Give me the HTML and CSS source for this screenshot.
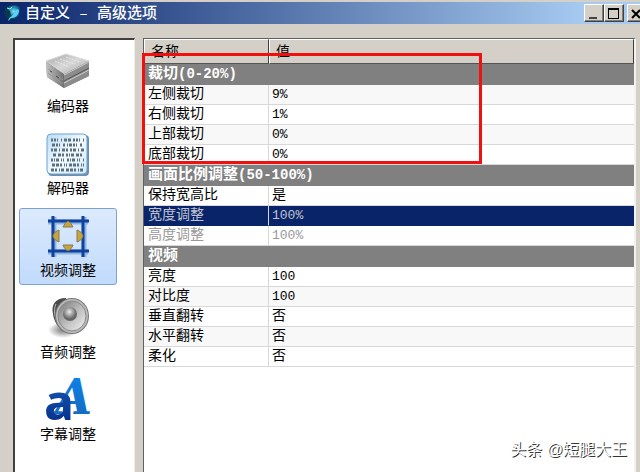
FILE: index.html
```html
<!DOCTYPE html>
<html lang="zh-CN">
<head>
    <meta charset="UTF-8">
    <meta name="viewport" content="width=device-width, initial-scale=1.0">
    <title>自定义 - 高级选项</title>
    <link rel="stylesheet" href="styles.css">
</head>
<body>

<header class="titlebar">
    <svg class="app-icon" width="18" height="18" viewBox="0 0 18 18">
        <defs>
            <radialGradient id="orb" cx="60%" cy="40%">
                <stop offset="0" stop-color="#7fe4f5"/>
                <stop offset="0.5" stop-color="#1f8fb8"/>
                <stop offset="1" stop-color="#082d52"/>
            </radialGradient>
        </defs>
        <path d="M1 3l5-1 7-1 4 2-1 8-5 6-7-1-3-7z" fill="url(#orb)"/>
        <path d="M2 4l5 3 1 5-4 3-3-6z" fill="#07394f"/>
        <path d="M5 17c1-5 5-4 6-8l3-4 2 1c0 5-4 8-7 8-2 0-2 2-4 3z" fill="#5fd0f5"/>
        <path d="M4 4l3 1 2-2" stroke="#9fe8f5" fill="none"/>
    </svg>
    <h1>自定义 – 高级选项</h1>
    <div class="window-buttons">
        <button type="button" aria-label="最小化"><svg width="16" height="14" viewBox="0 0 16 14"><path d="M4 11h8v2H4z" fill="#444"/></svg></button>
        <button type="button" aria-label="最大化"><svg width="16" height="14" viewBox="0 0 16 14"><path d="M3 2h11v11H3zM4 4v8h9V4z" fill-rule="evenodd"/></svg></button>
        <button type="button" class="close" aria-label="关闭"><svg width="16" height="14" viewBox="0 0 16 14"><path d="M4 4l8 8M12 4l-8 8" stroke="#000" stroke-width="2"/></svg></button>
    </div>
</header>

<main class="content">
    <nav class="sidebar">
        <button type="button" class="tab">
            <svg width="48" height="44" viewBox="0 0 48 44">
                <defs>
                    <linearGradient id="boxTop" x1="0" y1="0" x2="1" y2="1">
                        <stop offset="0" stop-color="#a5a5a5"/>
                        <stop offset="0.5" stop-color="#d8d8d8"/>
                        <stop offset="1" stop-color="#a8a8a8"/>
                    </linearGradient>
                    <linearGradient id="boxSide">
                        <stop offset="0" stop-color="#c4c4c4"/>
                        <stop offset="1" stop-color="#6f6f6f"/>
                    </linearGradient>
                </defs>
                <path d="M2 11l20-8 23 7v15L20 37 3 26z" fill="#888"/>
                <path d="M2 10l20-7 23 7-25 13z" fill="url(#boxTop)" stroke="#ddd"/>
                <path d="M2 11l18 12v14L3 26z" fill="url(#boxSide)"/>
                <path d="M20 23l25-13v15L20 37z" fill="#8c8c8c"/>
                <path d="M20 30l25-13" stroke="#555" fill="none"/>
                <path d="M20 24l25-13M20 32l25-13" stroke="#ccc" fill="none"/>
                <path d="M4 18l15 11M4 22l15 11" stroke="#999" fill="none"/>
                <path d="M16 8l15 5M22 6l14 5M11 10l14 6" stroke="#e8e8e8" stroke-dasharray="2 1" fill="none"/>
                <path d="M6 20l2 1M12 25l3 2" stroke="#444"/>
            </svg>
            <span>编码器</span>
        </button>
        <button type="button" class="tab">
            <svg width="44" height="44" viewBox="0 0 44 44">
                <defs>
                    <linearGradient id="sheet" x1="0" y1="0" x2="1" y2="1">
                        <stop offset="0" stop-color="#b9dcf8"/>
                        <stop offset="0.5" stop-color="#f1f9ff"/>
                        <stop offset="1" stop-color="#d1eafb"/>
                    </linearGradient>
                </defs>
                <rect x="2" y="2" width="41" height="41" rx="4" fill="#6d8fac"/>
                <rect x="1" y="1" width="40" height="40" rx="4" fill="url(#sheet)" stroke="#6ba3d5"/>
                <g stroke="#5c6f7b" stroke-width="3" fill="none">
                    <path d="M5 7h34" stroke-dasharray="2 1 2 1 1 3 1 2 3 1 3 2"/>
                    <path d="M6 12h32" stroke-dasharray="3 1 2 1 1 3 2 2 1 1"/>
                    <path d="M5 17h34" stroke-dasharray="2 1 3 2 1 2 3 1 2 2"/>
                    <path d="M7 22h31" stroke-dasharray="3 2 3 1 2 2 2 1 1 1"/>
                    <path d="M5 27h33" stroke-dasharray="2 1 1 1 3 2 1 1 1 3"/>
                    <path d="M6 32h33" stroke-dasharray="3 1 3 1 2 2 1 1 1 2"/>
                    <path d="M5 37h33" stroke-dasharray="3 1 2 2 1 1 3 2 3 1"/>
                </g>
            </svg>
            <span>解码器</span>
        </button>
        <button type="button" class="tab selected">
            <svg width="44" height="44" viewBox="0 0 44 44">
                <path d="M8 2v40M38 2v40M2 7h40M2 37h40" stroke="#8db7e3" stroke-width="5"/>
                <path d="M7 1v41M37 1v41M2 6h41M2 36h41" stroke="#12429d" stroke-width="3"/>
                <g fill="#c6a541" stroke="#887a45">
                    <path d="M17 12c1-2 3-5 5-6 2 1 4 4 5 6z"/>
                    <path d="M17 30h10c-1 3-3 5-5 6-2-1-4-3-5-6z"/>
                    <path d="M13 15v12c-3-1-6-4-6-6s3-5 6-6z"/>
                    <path d="M31 15c3 1 6 4 6 6s-3 5-6 6z"/>
                </g>
            </svg>
            <span>视频调整</span>
        </button>
        <button type="button" class="tab">
            <svg width="48" height="44" viewBox="0 0 48 44">
                <defs>
                    <linearGradient id="ring" x1="0" y1="0" x2="1" y2="1">
                        <stop offset="0" stop-color="#777"/>
                        <stop offset="0.5" stop-color="#bbb"/>
                        <stop offset="1" stop-color="#f3f3f3"/>
                    </linearGradient>
                    <radialGradient id="cone" cx="45%" cy="35%">
                        <stop offset="0" stop-color="#eee"/>
                        <stop offset="0.6" stop-color="#999"/>
                        <stop offset="1" stop-color="#666"/>
                    </radialGradient>
                    <radialGradient id="shade">
                        <stop offset="0" stop-color="#777"/>
                        <stop offset="1" stop-color="#777" stop-opacity="0"/>
                    </radialGradient>
                </defs>
                <ellipse cx="19" cy="33" rx="15" ry="8" fill="url(#shade)"/>
                <path d="M22 1C11 1 7 8 9 17c1 8 5 14 12 17z" fill="#4a4a4a"/>
                <path d="M12 7c-3 6-1 16 3 21" stroke="#bbb" fill="none"/>
                <ellipse cx="28" cy="19" rx="17" ry="18" fill="#777"/>
                <ellipse cx="28" cy="19" rx="16" ry="17" fill="#bbb"/>
                <ellipse cx="28" cy="19" rx="14" ry="15" fill="url(#ring)" stroke="#888"/>
                <circle cx="26" cy="17" r="7" fill="url(#cone)"/>
            </svg>
            <span>音频调整</span>
        </button>
        <button type="button" class="tab">
            <svg width="48" height="44" viewBox="0 0 48 44">
                <defs>
                    <linearGradient id="capA" x1="0" y1="0" x2="0" y2="1">
                        <stop offset="0" stop-color="#0b86ef"/>
                        <stop offset="1" stop-color="#1766b8"/>
                    </linearGradient>
                    <linearGradient id="lowA" x1="0" y1="0" x2="0" y2="1">
                        <stop offset="0" stop-color="#1766c4"/>
                        <stop offset="1" stop-color="#05247d"/>
                    </linearGradient>
                </defs>
                <text class="cap" x="11" y="35" fill="url(#capA)">A</text>
                <text class="low" x="0" y="41" fill="url(#lowA)">a</text>
            </svg>
            <span>字幕调整</span>
        </button>
    </nav>

    <section class="panel">
        <table class="options">
            <thead>
                <tr><th class="name">名称</th><th>值</th></tr>
            </thead>
            <tbody>
                <tr class="group"><th colspan="2">裁切<span class="num">(0-20%)</span></th></tr>
                <tr class="alt"><td>左侧裁切</td><td><span class="num">9%</span></td></tr>
                <tr><td>右侧裁切</td><td><span class="num">1%</span></td></tr>
                <tr class="alt"><td>上部裁切</td><td><span class="num">0%</span></td></tr>
                <tr><td>底部裁切</td><td><span class="num">0%</span></td></tr>
            </tbody>
            <tbody>
                <tr class="group"><th colspan="2">画面比例调整<span class="num">(50-100%)</span></th></tr>
                <tr><td>保持宽高比</td><td>是</td></tr>
                <tr class="current"><td>宽度调整</td><td><span class="num">100%</span></td></tr>
                <tr class="disabled"><td>高度调整</td><td><span class="num">100%</span></td></tr>
            </tbody>
            <tbody>
                <tr class="group"><th colspan="2">视频</th></tr>
                <tr><td>亮度</td><td><span class="num">100</span></td></tr>
                <tr class="alt"><td>对比度</td><td><span class="num">100</span></td></tr>
                <tr><td>垂直翻转</td><td>否</td></tr>
                <tr class="alt"><td>水平翻转</td><td>否</td></tr>
                <tr><td>柔化</td><td>否</td></tr>
            </tbody>
        </table>
        <div class="highlight"></div>
        <p class="watermark">头条 @短腿大王</p>
    </section>
</main>

</body>
</html>
```
FILE: styles.css
```css
* {
    box-sizing: border-box;
}
body {
    margin: 0;
    height: 100vh;
    overflow: hidden;
    display: flex;
    flex-direction: column;
    background-color: #d4d0c8;
    color: #000;
    font-family: "Liberation Mono", "Noto Sans CJK SC", monospace;
    font-size: 14px;
}
button {
    font: inherit;
    color: inherit;
}

/* title bar */
.titlebar {
    display: flex;
    align-items: center;
    height: 22px;
    margin: 2px -9px 0 0;
    padding: 0 2px 0 3px;
    flex-shrink: 0;
    background: linear-gradient(to right, #0a246a, #a6caf0 90%);
    color: #fff;
}
.titlebar h1 {
    flex: 1;
    margin: 0 0 0 4px;
    padding-top: 3px;
    font-size: 15px;
    font-weight: 500;
    line-height: 19px;
    white-space: pre;
}
.window-buttons {
    display: flex;
}
.window-buttons button {
    width: 20px;
    height: 18px;
    padding: 0;
    background-color: #d4d0c8;
    border: 1px solid;
    border-color: #fff #404040 #404040 #fff;
    box-shadow: inset -1px -1px 0 #808080;
}
.window-buttons svg {
    display: block;
}
.window-buttons .close {
    margin-left: 3px;
}

.content {
    flex: 1;
    display: flex;
    gap: 8px;
    min-height: 0;
    padding: 14px 4px 0 13px;
}

/* left tabs */
.sidebar {
    display: flex;
    flex-direction: column;
    gap: 5px;
    width: 122px;
    padding: 4px 17px 0 4px;
    background-color: #fff;
    border: solid #404040;
    border-width: 2px 0 0 2px;
    border-right: 1px solid #f0eee8;
}
.tab {
    display: flex;
    flex-direction: column;
    align-items: center;
    gap: 2px;
    height: 77px;
    flex-shrink: 0;
    padding: 6px 0 0;
    background: none;
    border: 1px solid transparent;
    border-radius: 3px;
    line-height: 20px;
}
.tab svg {
    overflow: visible;
}
.tab.selected {
    background: linear-gradient(#dceafc, #c1dbfc);
    border-color: #7da2ce;
}
.cap {
    font: italic bold 48px "DejaVu Serif", serif;
}
.low {
    font: bold 50px "Open Sans", sans-serif;
}

/* option list */
.panel {
    position: relative;
    flex: 1;
    background-color: #fff;
    border: solid #606060;
    border-width: 1px 0 0 1px;
    border-right: 2px solid #f4f2ee;
}
.options {
    width: 100%;
    table-layout: fixed;
    border-collapse: separate;
    border-spacing: 0;
}
.options th,
.options td {
    height: 20px;
    padding: 0 4px;
    line-height: 19px;
    text-align: left;
    font-weight: normal;
    white-space: nowrap;
}
.options thead th {
    height: 25px;
    padding: 2px 6px 0;
    line-height: 21px;
    background-color: #d4d0c8;
    border: 1px solid;
    border-color: #fff #404040 #555 #fff;
}
.options .name {
    width: 125px;
}
.options td {
    border-bottom: 1px solid #d8d8d8;
}
.options td:first-child {
    border-right: 1px solid #d8d8d8;
}
.options td + td {
    padding-left: 3px;
}
.options .alt {
    background-color: #f8f8f8;
}
.options .group th {
    height: 21px;
    line-height: 21px;
    background-color: #808080;
    color: #fff;
    font-size: 15px;
    font-weight: bold;
}
.options .num {
    font-size: 13px;
}
.options .group .num {
    font-size: 14px;
}
.options .current {
    background-color: #0a246a;
    color: #c0c4d0;
}
.options .current td {
    border-bottom-color: #0a246a;
}
.options .disabled {
    color: #999;
}

/* red frame over the crop settings */
.highlight {
    position: absolute;
    top: 14px;
    left: -2px;
    width: 340px;
    height: 111px;
    border: 3px solid #f01010;
}
.watermark {
    position: absolute;
    right: 7px;
    bottom: 10px;
    margin: 0;
    font-family: "Liberation Sans", "Noto Sans CJK SC", sans-serif;
    font-size: 16px;
    line-height: 24px;
    color: #fff;
    text-shadow: 1px 1px 0 #333;
}
```
